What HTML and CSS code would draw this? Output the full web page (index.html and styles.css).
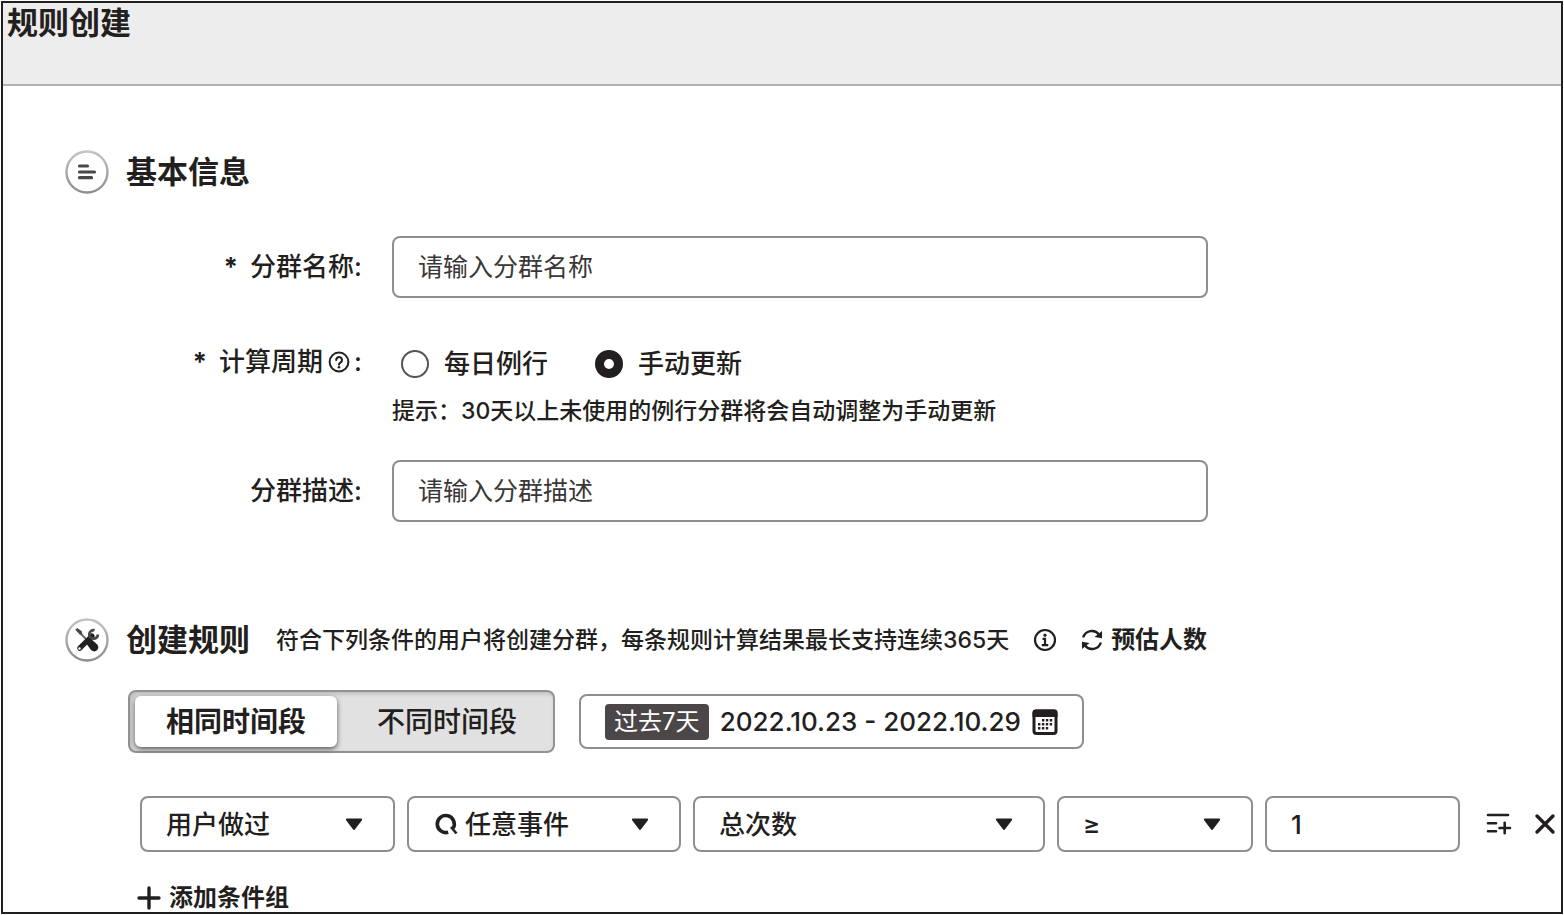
FILE: index.html
```html
<!DOCTYPE html>
<html lang="zh-CN">
<head>
<meta charset="utf-8">
<meta name="viewport" content="width=device-width, initial-scale=1">
<title>规则创建</title>
<link rel="stylesheet" href="styles.css">
</head>
<body>
<div class="page">
  <header class="page-header"><h1 class="title">规则创建</h1></header>
  <main class="content">
    <section class="basic">
      <div class="section-head">
        <svg class="badge" viewBox="0 0 44 44" aria-hidden="true">
          <defs><linearGradient id="ring" x1="0" y1="0" x2="0" y2="1"><stop offset="0" stop-color="#c4c4c4"/><stop offset="1" stop-color="#8c8c8c"/></linearGradient></defs>
          <circle cx="22" cy="22" r="20.5" fill="#fff" stroke="url(#ring)" stroke-width="2.4"/>
          <path d="M14.500 16h8M14.500 22h15M14.500 27.700h12" stroke="#4b4748" stroke-width="3.200" stroke-linecap="round"/>
        </svg>
        <h2 class="title">基本信息</h2>
      </div>
      <form class="form">
        <label class="label" for="name"><span class="star">*</span>分群名称:</label>
        <input class="box text-box" id="name" type="text" placeholder="请输入分群名称">

        <div class="label period-label" id="period"><span class="star">*</span>计算周期<svg class="help" viewBox="0 0 22 22" aria-hidden="true"><circle cx="11" cy="11" r="9.400" fill="none" stroke="#231f20" stroke-width="2"/><path d="M8.200 9a2.900 2.900 0 1 1 4.500 2.400c-1.200.8-1.700 1.200-1.700 2.200" fill="none" stroke="#231f20" stroke-width="2.100" stroke-linecap="round"/><circle cx="11" cy="16.300" r="1.300" fill="#231f20"/></svg>:</div>
        <div class="period" role="radiogroup" aria-labelledby="period">
          <div class="radios">
            <label class="radio-label"><input class="radio" type="radio" name="period">每日例行</label>
            <label class="radio-label"><input class="radio" type="radio" name="period" checked>手动更新</label>
          </div>
          <p class="hint">提示：30天以上未使用的例行分群将会自动调整为手动更新</p>
        </div>

        <label class="label" for="desc">分群描述:</label>
        <input class="box text-box" id="desc" type="text" placeholder="请输入分群描述">
      </form>
    </section>

    <section class="rules">
      <div class="section-head">
        <svg class="badge" viewBox="0 0 44 44" aria-hidden="true">
          <circle cx="22" cy="22" r="20.500" fill="#fff" stroke="url(#ring)" stroke-width="2.400"/>
          <path d="M15 15l7 7" stroke="#6b6768" stroke-width="2"/>
          <path d="M10.300 11.800l2-1.800 4.500 3.200.6 3-2.600.3z" fill="#4b4748"/>
          <path d="M20.500 24.500l4.500-4.500 7 6.300q2.600 3 .2 5.700t-6 .3z" fill="#231f20"/>
          <path d="M14.800 30.200L27 18" stroke="#231f20" stroke-width="5.200" stroke-linecap="round"/>
          <path d="M29.600 12.200a4.300 4.300 0 1 0 3.300 4.300" fill="none" stroke="#4b4748" stroke-width="2.800"/>
          <circle cx="14.500" cy="30.500" r="1.200" fill="#fff"/>
        </svg>
        <h2 class="title">创建规则</h2>
        <p class="note">符合下列条件的用户将创建分群，每条规则计算结果最长支持连续365天</p>
        <svg class="info" viewBox="0 0 24 24" aria-hidden="true"><circle cx="12" cy="12" r="10" fill="none" stroke="#231f20" stroke-width="2.200"/><circle cx="12" cy="7.200" r="1.600" fill="#231f20"/><path d="M9.500 10.800H12v6.400M8.800 17.200h6.400" fill="none" stroke="#231f20" stroke-width="2.200"/></svg>
        <button class="plain estimate" type="button">
          <svg class="refresh" viewBox="0 0 22 22" aria-hidden="true"><path d="M2.200 8.500A9 9 0 0 1 18 5.500M19.800 13.500A9 9 0 0 1 4 16.500" fill="none" stroke="#231f20" stroke-width="2.400"/><path d="M21 2v7.200l-7.500-1.200zM1 20v-7.200l7.500 1.200z" fill="#231f20"/></svg>
          预估人数
        </button>
      </div>

      <div class="time-row">
        <div class="segment">
          <button class="seg active" type="button" aria-pressed="true">相同时间段</button>
          <button class="seg" type="button" aria-pressed="false">不同时间段</button>
        </div>
        <button class="box date" type="button">
          <span class="tag">过去7天</span>
          <span>2022.10.23 - 2022.10.29</span>
          <svg class="calendar" viewBox="0 0 26 26" aria-hidden="true"><rect x="2" y="2" width="22" height="22.500" rx="2.500" fill="#fff" stroke="#231f20" stroke-width="3"/><path d="M.5 3.500q0-3 3-3h19q3 0 3 3v4.500H.5z" fill="#231f20"/><path d="M10 11.300h11M6 15.300h15M6 19.300h11" stroke="#231f20" stroke-width="2.400" stroke-dasharray="2.400 1.500"/></svg>
        </button>
      </div>

      <div class="condition">
        <div class="box select-box"><select class="select" aria-label="用户行为"><option>用户做过</option></select><svg class="arrow" viewBox="0 0 16 12" aria-hidden="true"><path d="M1.500 1.500h13L8 10z" fill="#231f20" stroke="#231f20" stroke-width="2" stroke-linejoin="round"/></svg></div>
        <div class="box select-box"><svg class="search" viewBox="0 0 24 24" aria-hidden="true"><path d="M13.200 20.200A8.500 8.500 0 1 1 18.200 16.200" fill="none" stroke="#231f20" stroke-width="3.600"/><path d="M16 15l5.500 6.500" stroke="#231f20" stroke-width="2.600"/></svg><select class="select" aria-label="事件"><option>任意事件</option></select><svg class="arrow" viewBox="0 0 16 12" aria-hidden="true"><path d="M1.500 1.500h13L8 10z" fill="#231f20" stroke="#231f20" stroke-width="2" stroke-linejoin="round"/></svg></div>
        <div class="box select-box"><select class="select" aria-label="指标"><option>总次数</option></select><svg class="arrow" viewBox="0 0 16 12" aria-hidden="true"><path d="M1.500 1.500h13L8 10z" fill="#231f20" stroke="#231f20" stroke-width="2" stroke-linejoin="round"/></svg></div>
        <div class="box select-box"><select class="select" aria-label="运算符"><option>≥</option></select><svg class="arrow" viewBox="0 0 16 12" aria-hidden="true"><path d="M1.500 1.500h13L8 10z" fill="#231f20" stroke="#231f20" stroke-width="2" stroke-linejoin="round"/></svg></div>
        <input class="box value" type="text" value="1" aria-label="数值">
        <div class="actions">
          <button class="plain" type="button" aria-label="添加条件"><svg class="add-line" viewBox="0 0 26 24" aria-hidden="true"><path d="M2 3h20M2 11.200h8M2 19.200h8M13.500 16h10.500M18.700 10.700v10.600" fill="none" stroke="#231f20" stroke-width="2.600" stroke-linecap="round"/></svg></button>
          <button class="plain" type="button" aria-label="删除条件"><svg class="close" viewBox="0 0 22 22" aria-hidden="true"><path d="M3 3l16 16M19 3L3 19" stroke="#231f20" stroke-width="3.400" stroke-linecap="round"/></svg></button>
        </div>
      </div>

      <button class="plain add-group" type="button"><svg class="plus" viewBox="0 0 24 24" aria-hidden="true"><path d="M2 12h20M12 2v20" stroke="#231f20" stroke-width="3.400" stroke-linecap="round"/></svg>添加条件组</button>
    </section>
  </main>
</div>
</body>
</html>
```
FILE: styles.css
```css
* { box-sizing: border-box; }

body {
  margin: 0;
  padding: 1px;
  background: #fff;
  color: #231f20;
  font: 500 26px/36px Inter, "Noto Sans CJK SC", sans-serif;
}

button, input, select { font: inherit; color: inherit; }
h1, h2, p { margin: 0; }
svg { display: block; flex: none; }

.page {
  min-height: calc(100vh - 2px);
  border: 2px solid #231f20;
}

.page-header {
  height: 83px;
  padding: 0 4px;
  background: #ededed;
  border-bottom: 2px solid #b3b3b3;
}

.title {
  font-size: 31px;
  line-height: 40px;
  font-weight: 700;
  white-space: nowrap;
}

.content { padding: 64px 5px 0 62px; }

.section-head {
  display: flex;
  align-items: center;
}

.badge { width: 44px; height: 44px; margin-right: 17px; }

.form {
  display: grid;
  grid-template-columns: 297px minmax(0, 816px);
  column-gap: 30px;
  margin-top: 42px;
}

.label {
  display: flex;
  align-items: center;
  justify-content: flex-end;
  white-space: nowrap;
}

.star { margin-right: 12px; font-weight: 700; }

.box {
  border: 2px solid #8e8e8e;
  border-radius: 8px;
  background: #fff;
}

.text-box {
  width: 100%;
  height: 62px;
  padding: 0 24px;
  font-size: 25px;
  font-weight: 400;
}

.text-box::placeholder { color: #3a3637; opacity: 1; }

.period-label { height: 36px; margin-top: 46px; }
.help { width: 22px; height: 22px; margin: 0 4px 0 5px; }
.period { padding: 48px 0 33px; }
.radios { display: flex; gap: 47px; padding-left: 9px; }
.radio-label { display: flex; align-items: center; gap: 15px; }

.radio {
  appearance: none;
  width: 28px;
  height: 28px;
  margin: 0;
  border: 2px solid #555;
  border-radius: 50%;
}

.radio:checked { border: 9px solid #231f20; }

.hint, .note {
  font-size: 23px;
  line-height: 32px;
}

.hint { margin-top: 13px; }

.rules { margin-top: 96px; }
.note { margin-left: 26px; white-space: nowrap; }
.info { width: 24px; height: 24px; margin-left: 24px; }

.plain {
  padding: 0;
  border: 0;
  background: none;
}

.estimate {
  display: flex;
  align-items: center;
  gap: 8px;
  margin-left: 24px;
  font-size: 24px;
  font-weight: 700;
  white-space: nowrap;
}

.refresh { width: 22px; height: 22px; }

.time-row {
  display: flex;
  align-items: center;
  gap: 24px;
  margin: 28px 0 0 63px;
}

.segment {
  display: flex;
  height: 63px;
  padding: 4px 5px;
  border: 2px solid #929292;
  border-radius: 8px;
  background: #e1e1e1;
  box-shadow: inset 2px 2px 4px #bbb;
}

.seg {
  width: 202px;
  padding: 0;
  border: 0;
  border-radius: 6px;
  background: none;
  font-size: 28px;
}

.seg + .seg { width: 211px; padding-left: 9px; }

.seg.active {
  height: 51px;
  background: #fff;
  box-shadow: 0 2px 5px #555;
  font-weight: 700;
}

.date {
  display: flex;
  align-items: center;
  justify-content: space-between;
  min-width: 505px;
  height: 55px;
  padding: 0 24px;
  white-space: nowrap;
}

.tag {
  padding: 0 9px;
  border-radius: 4px;
  background: #4b4748;
  color: #fff;
  font-size: 24px;
  font-weight: 400;
}

.calendar { width: 26px; height: 26px; }

.condition {
  display: grid;
  grid-template-columns: 255fr 274fr 352fr 196fr 195fr auto;
  gap: 12px;
  margin: 43px 0 0 75px;
}

.select-box {
  display: flex;
  align-items: center;
  min-width: 0;
  height: 56px;
  padding: 0 30px 0 24px;
}

.select {
  flex: 1;
  min-width: 0;
  height: 100%;
  padding: 2px 0 0;
  border: 0;
  background: none;
  appearance: none;
}

.arrow { width: 18px; height: 13px; }
.search { width: 24px; height: 24px; margin: 0 6px 0 2px; }

.value {
  min-width: 0;
  height: 56px;
  padding: 0 24px;
}

.actions {
  display: flex;
  align-items: center;
  gap: 22px;
  padding-left: 14px;
}

.add-line { width: 26px; height: 24px; }
.close { width: 22px; height: 22px; }

.add-group {
  display: flex;
  align-items: center;
  gap: 8px;
  margin: 32px 0 0 72px;
  font-size: 24px;
  line-height: 28px;
  font-weight: 700;
}

.plus { width: 24px; height: 24px; }
```
